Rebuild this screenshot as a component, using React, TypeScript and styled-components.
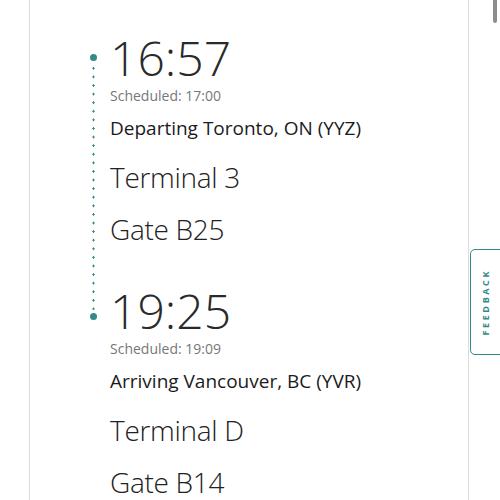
import React from "react";
import styled, { createGlobalStyle } from "styled-components";

const GlobalStyle = createGlobalStyle`
  html, body {
    margin: 0;
    padding: 0;
    background: #fff;
    overflow: hidden;
  }
  body {
    font-family: "Open Sans", "Noto Sans", sans-serif;
    color: #222;
  }
`;

const teal = "#348a86";

const Page = styled.div`
  height: 500px;
  overflow: hidden;
  position: relative;
`;

const Panel = styled.div`
  margin-left: 29px;
  width: 440px;
  min-height: 600px;
  border-left: 1px solid #dcdcdc;
  border-right: 1px solid #dcdcdc;
  padding: 30px 0 0 56px;
  box-sizing: border-box;
`;

const Timeline = styled.div`
  display: flex;
  align-items: flex-start;
  gap: 10px;
`;

const Rail = styled.div`
  width: 14px;
  height: 266px;
  margin-top: 24px;
  display: flex;
  flex-direction: column;
  align-items: center;
`;

const Dot = styled.span`
  width: 7px;
  height: 7px;
  border-radius: 50%;
  background: ${teal};
  flex: none;
`;

const Dotted = styled.span`
  flex: 1;
  width: 3px;
  margin: 3px 0;
  background-image: radial-gradient(circle, ${teal} 0.95px, transparent 1.35px);
  background-size: 3px 8.6px;
  background-repeat: repeat-y;
  background-position: 0 0;
`;

const Stops = styled.div`
  display: flex;
  flex-direction: column;
  gap: 36px;
`;

const Stop = styled.div`
  display: flex;
  flex-direction: column;
`;

const Time = styled.div`
  font-size: 48px;
  line-height: 56px;
  font-weight: 300;
  color: #2a2a2a;
`;

const Scheduled = styled.div`
  font-size: 14px;
  line-height: 20px;
  color: #777;
`;

const Route = styled.div`
  margin-top: 9px;
  font-size: 19px;
  line-height: 26px;
  color: #1b1b1b;
`;

const Detail = styled.div<{ $gap: number }>`
  margin-top: ${p => p.$gap}px;
  font-size: 28px;
  line-height: 36px;
  font-weight: 300;
  letter-spacing: -0.3px;
  color: #222;
`;

const ScrollThumb = styled.div`
  position: absolute;
  top: -4px;
  left: 493px;
  width: 4px;
  height: 27px;
  border-radius: 2px;
  background: #8d8d8d;
`;

const FeedbackTab = styled.button`
  position: absolute;
  top: 249px;
  left: 470px;
  width: 36px;
  height: 106px;
  padding: 0 6px 0 0;
  border: 1.5px solid ${teal};
  border-radius: 5px;
  background: #fff;
  display: flex;
  align-items: center;
  justify-content: center;
  cursor: pointer;
`;

const FeedbackLabel = styled.span`
  writing-mode: vertical-rl;
  transform: rotate(180deg);
  font-family: "Open Sans", sans-serif;
  font-size: 9px;
  font-weight: 700;
  letter-spacing: 2.6px;
  color: ${teal};
`;

interface StopData {
  time: string;
  scheduled: string;
  route: string;
  terminal: string;
  gate: string;
}

const stops: StopData[] = [
  {
    time: "16:57",
    scheduled: "Scheduled: 17:00",
    route: "Departing Toronto, ON (YYZ)",
    terminal: "Terminal 3",
    gate: "Gate B25",
  },
  {
    time: "19:25",
    scheduled: "Scheduled: 19:09",
    route: "Arriving Vancouver, BC (YVR)",
    terminal: "Terminal D",
    gate: "Gate B14",
  },
];

export default function App() {
  return (
    <Page>
      <GlobalStyle />
      <Panel>
        <Timeline>
          <Rail>
            <Dot />
            <Dotted />
            <Dot />
          </Rail>
          <Stops>
            {stops.map(s => (
              <Stop key={s.time}>
                <Time>{s.time}</Time>
                <Scheduled>{s.scheduled}</Scheduled>
                <Route>{s.route}</Route>
                <Detail $gap={18}>{s.terminal}</Detail>
                <Detail $gap={16}>{s.gate}</Detail>
              </Stop>
            ))}
          </Stops>
        </Timeline>
      </Panel>
      <ScrollThumb />
      <FeedbackTab>
        <FeedbackLabel>FEEDBACK</FeedbackLabel>
      </FeedbackTab>
    </Page>
  );
}
